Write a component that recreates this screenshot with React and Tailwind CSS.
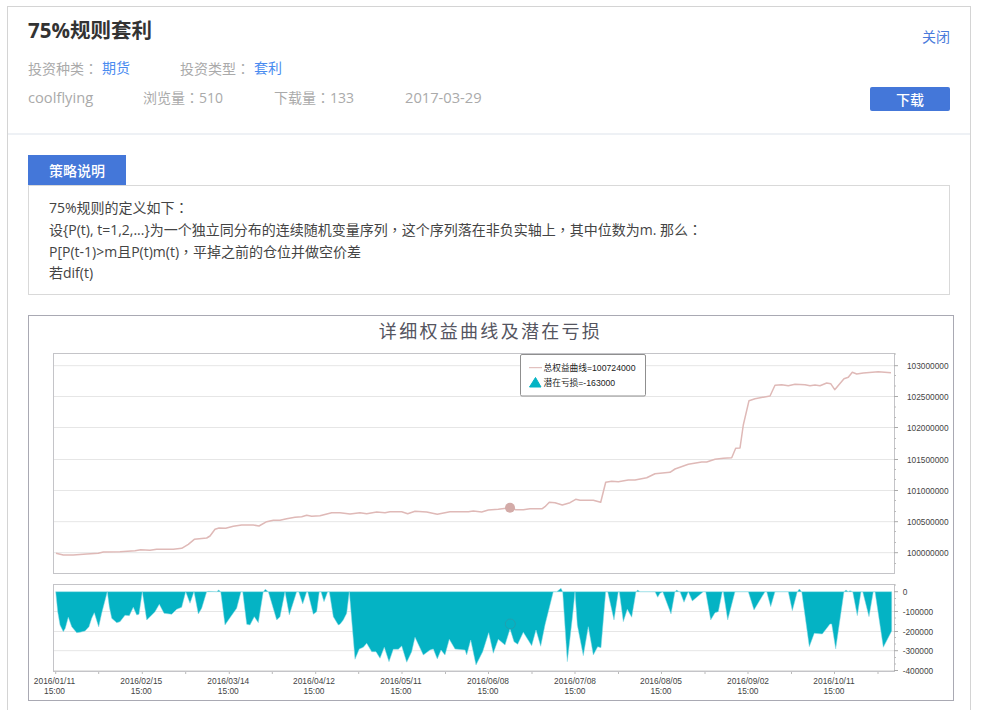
const z = (ox, oy, arr) => arr.map(([x, y]) => [ox + x / 3, oy + y / 3]);
const str = (pts) => pts.map(([x, y]) => `${x.toFixed(1)},${y.toFixed(1)}`).join(" ");

const linePts = [
  ...z(20, 310, [[108,730],[130,735],[160,735],[200,732],[235,730],[250,726],[300,725],[345,722],[362,719],[390,721],[410,718],[460,718],[485,715],[505,703],[523,688],[560,684],[570,678],[585,658],[597,654],[617,655],[640,649],[665,645],[700,645],[717,648],[740,635],[760,631],[780,631],[800,626],[825,622],[845,620],[860,616],[875,619],[900,617],[935,608]]),
  ...z(340, 310, [[0,608],[30,612],[60,608],[80,611],[110,606],[135,608],[150,605],[185,605],[203,611],[225,604],[260,606],[292,613],[330,605],[385,605],[400,603],[425,606],[445,600],[475,598],[510,593],[527,599],[550,599],[570,596],[607,596],[615,590],[628,577],[645,578],[667,585],[690,578],[707,568],[720,571],[760,571],[782,577],[797,517],[815,514],[835,515],[865,510],[885,510],[920,503],[945,491]]),
  ...z(660, 310, [[0,490],[30,487],[45,477],[85,463],[125,456],[140,456],[165,448],[190,445],[215,443],[227,415],[240,414],[250,345],[267,272],[285,266],[330,258],[345,226],[365,224],[385,227],[405,223],[435,224],[450,227],[465,225],[480,227],[500,219],[512,221],[524,239],[552,206],[565,202],[577,187],[590,192],[610,189],[655,185],[693,188]]),
];

const areaPts = [
  ...z(20, 575, [[107,50],[113,110],[120,150],[130,170],[136,160],[145,127],[155,155],[170,173],[180,172],[195,168],[207,155],[215,130],[223,113],[236,156],[245,115],[262,50],[268,95],[275,130],[290,143],[300,140],[315,121],[328,122],[340,97],[350,120],[357,118],[367,50],[380,135],[390,125],[405,110],[418,88],[432,115],[455,118],[470,103],[485,97],[497,50],[510,85],[522,50],[535,117],[545,100],[560,50],[565,49],[590,50],[596,45],[602,50],[615,150],[630,128],[650,100],[663,50],[668,50],[680,148],[690,150],[703,125],[715,143],[730,50],[736,43],[745,50],[770,135],[780,125],[795,50],[808,120],[830,50],[836,50],[848,87],[860,50],[863,50],[880,118],[890,110],[898,50],[903,50],[912,80],[923,50],[928,50],[940,125],[955,150]]),
  ...z(340, 575, [[0,148],[10,135],[20,115],[28,50],[45,253],[58,222],[70,217],[80,205],[95,230],[108,230],[120,250],[133,217],[147,260],[160,223],[175,223],[185,213],[200,262],[215,230],[225,187],[250,240],[270,225],[280,222],[292,252],[303,225],[315,240],[328,193],[345,222],[375,225],[380,240],[392,195],[408,270],[428,230],[446,173],[460,235],[475,193],[495,210],[510,162],[522,200],[533,208],[550,172],[575,212],[588,165],[602,214],[615,150],[640,50],[650,50],[663,40],[668,50],[682,260],[697,130],[705,50],[712,150],[730,242],[745,155],[760,240],[773,215],[783,218],[797,50],[803,50],[822,135],[835,50],[838,50],[850,140],[862,103],[875,127],[888,50],[893,45],[900,50],[945,50],[953,67]]),
  ...z(660, 575, [[0,55],[8,50],[33,117],[45,50],[50,45],[57,50],[60,50],[72,82],[85,50],[97,78],[130,50],[137,50],[152,135],[165,113],[175,110],[187,50],[190,50],[203,135],[225,50],[265,50],[282,105],[315,50],[320,50],[332,95],[345,50],[385,50],[397,107],[412,50],[418,42],[425,50],[448,215],[463,175],[487,177],[510,147],[515,147],[527,222],[552,50],[558,45],[565,50],[570,47],[578,50],[592,122],[603,50],[608,50],[627,125],[640,50],[645,50],[670,217],[695,168],[695,50]]),
];

const topGrid = [
  [365.7, "103000000"],
  [396.5, "102500000"],
  [427.5, "102000000"],
  [459.5, "101500000"],
  [490.5, "101000000"],
  [521.7, "100500000"],
  [552.7, "100000000"],
];
const topMinor = [354, 375.5, 386, 407, 417.5, 438.5, 448.5, 469.5, 479.5, 500.5, 511.5, 531.5, 542.5, 563.5];
const botGrid = [
  [591.7, "0", false],
  [611.5, "-100000", true],
  [631.5, "-200000", true],
  [650.7, "-300000", true],
  [670.5, "-400000", true],
];
const botMinor = [585, 598.5, 605, 618, 624.5, 637.5, 644, 657.5, 664];
const dates = [
  [54.5, "2016/01/11"],
  [141.3, "2016/02/15"],
  [228.3, "2016/03/14"],
  [314, "2016/04/12"],
  [401, "2016/05/11"],
  [488, "2016/06/08"],
  [575, "2016/07/08"],
  [661, "2016/08/05"],
  [748, "2016/09/02"],
  [834, "2016/10/11"],
];
const xTicks = [55.7, 98.7, 142.3, 185.7, 229.3, 272.3, 315.7, 358.7, 402, 445.5, 488.5, 532, 575, 618.5, 661.5, 705, 748, 791.5, 834.5, 878];

const chartFont = "font-['Liberation_Sans','Noto_Sans_CJK_SC',sans-serif]";

function Chart() {
  return (
    <svg width="924" height="384" viewBox="29 316 924 384" className="block">
      <text x="490.5" y="337.5" textAnchor="middle" className="font-['Noto_Sans_CJK_SC',sans-serif] text-[18px] tracking-[2.3px] fill-[#55555f]">
        详细权益曲线及潜在亏损
      </text>

      {/* top plot */}
      {topGrid.map(([y]) => (
        <line key={y} x1="54" x2="894" y1={y} y2={y} stroke="#e6e6e6" />
      ))}
      <rect x="53.5" y="353.5" width="841" height="220" fill="none" stroke="#c4c4c8" />
      {topGrid.map(([y, t]) => (
        <g key={t}>
          <line x1="894" x2="898" y1={y} y2={y} stroke="#aaa" />
          <text x="907" y={y + 3} className={`${chartFont} text-[8.3px] fill-[#444]`}>{t}</text>
        </g>
      ))}
      {topMinor.map((y) => (
        <line key={y} x1="894" x2="896" y1={y} y2={y} stroke="#bbb" />
      ))}
      <polyline points={str(linePts)} fill="none" stroke="#dfb9b7" strokeWidth="1.5" strokeLinejoin="round" />
      <circle cx="510" cy="507.7" r="5" fill="#d3aba8" />

      {/* legend */}
      <rect x="520.5" y="354.5" width="125" height="41.5" rx="1.5" fill="#fff" stroke="#8f8f8f" />
      <line x1="529" x2="542" y1="367.7" y2="367.7" stroke="#dcb3b1" />
      <text x="543.5" y="370.8" className={`${chartFont} text-[8.7px] fill-[#222]`}>总权益曲线=100724000</text>
      <path d="M535.5 377.5 L541 387 L529.5 387 Z" fill="#04b3c4" stroke="#04b3c4" strokeLinejoin="round" />
      <text x="543.5" y="386" className={`${chartFont} text-[8.7px] fill-[#222]`}>潜在亏损=-163000</text>

      {/* bottom plot */}
      {botGrid.slice(1, 4).map(([y]) => (
        <line key={y} x1="54" x2="894" y1={y} y2={y} stroke="#e6e6e6" />
      ))}
      <rect x="54" y="670" width="840" height="2" fill="#e4e4e4" />
      <rect x="53.5" y="584.5" width="841" height="87" fill="none" stroke="#c4c4c8" />
      <polygon points={str(areaPts)} fill="#04b3c4" stroke="#8fdbe4" strokeWidth="0.5" />
      <circle cx="510.3" cy="624" r="5" fill="#04b3c4" stroke="#2f98a5" strokeWidth="0.7" />
      {botGrid.map(([y, t]) => (
        <g key={t}>
          <line x1="894" x2="898" y1={y} y2={y} stroke="#aaa" />
          <text x="902.7" y={y + 3} className={`${chartFont} text-[8.3px] fill-[#444]`}>{t}</text>
        </g>
      ))}
      {botMinor.map((y) => (
        <line key={y} x1="894" x2="896" y1={y} y2={y} stroke="#bbb" />
      ))}
      {xTicks.map((x) => (
        <line key={x} x1={x} x2={x} y1="672" y2="674" stroke="#bbb" />
      ))}
      {dates.map(([x, d]) => (
        <g key={d}>
          <text x={x} y="684" textAnchor="middle" className={`${chartFont} text-[8.4px] fill-[#444]`}>{d}</text>
          <text x={x} y="694" textAnchor="middle" className={`${chartFont} text-[8.4px] fill-[#444]`}>15:00</text>
        </g>
      ))}
    </svg>
  );
}

function Pc({ children }) {
  return <span className="font-['Noto_Sans_CJK_TC',sans-serif]">{children}</span>;
}

export default function App() {
  return (
    <div className="h-[710px] overflow-hidden bg-white pt-[6px] pl-[7px] font-['Open_Sans','Noto_Sans_CJK_SC',sans-serif]">
      <div className="w-[964px] border border-[#d4d4d4] pb-5">
        <div className="flex h-[128px] justify-between border-b-2 border-[#eef1f5] px-5">
          <div>
            <h1 className="mt-[7px] text-[20.5px] leading-8 font-bold text-[#333]">75%规则套利</h1>
            <div className="mt-[12px] flex h-5 items-center text-[14px] leading-5 text-[#aaa]">
              <span className="w-[74px]">投资种类<Pc>：</Pc></span>
              <span className="w-[78px] text-[#4a8bf0]">期货</span>
              <span className="w-[74px]">投资类型<Pc>：</Pc></span>
              <span className="text-[#4a8bf0]">套利</span>
            </div>
            <div className="mt-[9px] flex h-5 items-center text-[14px] leading-5 text-[#aaa]">
              <span className="w-[115px] text-[14.7px]">coolflying</span>
              <span className="w-[131px]">浏览量<Pc>：</Pc>510</span>
              <span className="w-[131px]">下载量<Pc>：</Pc>133</span>
              <span className="text-[14.7px]">2017-03-29</span>
            </div>
          </div>
          <div className="flex flex-col items-end pt-5">
            <a className="text-[14px] leading-5 text-[#4a7bdb]">关闭</a>
            <button className="mt-10 h-6 w-20 rounded-[2px] bg-[#4477d9] text-[14px] font-medium text-white">下载</button>
          </div>
        </div>

        <div className="px-5 pt-5">
          <div className="flex h-[30px] w-[98px] items-center justify-center bg-[#4477d9] pt-px text-[14px] font-medium text-white">
            策略说明
          </div>
          <div className="h-[110px] border border-[#d9d9d9] px-5 py-[10px] text-[14px] leading-[22px] text-[#444]">
            <p className="h-[22px]">75%规则的定义如下<Pc>：</Pc></p>
            <p className="h-[22px]">设{"{"}P(t), t=1,2,...{"}"}为一个独立同分布的连续随机变量序列<Pc>，</Pc>这个序列落在非负实轴上<Pc>，</Pc>其中位数为m. 那么<Pc>：</Pc></p>
            <p className="h-[22px]">P[P(t-1)&gt;m且P(t)m(t)<Pc>，</Pc>平掉之前的仓位并做空价差</p>
            <p className="h-[22px]">若dif(t)</p>
          </div>
          <div className="mt-5 w-[926px] border border-[#a9a9b3]">
            <Chart />
          </div>
        </div>
      </div>
    </div>
  );
}
